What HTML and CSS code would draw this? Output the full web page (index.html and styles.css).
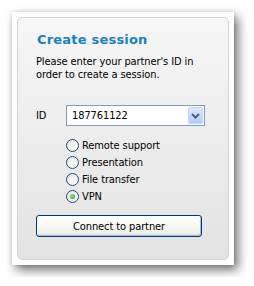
FILE: index.html
```html
<!DOCTYPE html>
<html lang="en">

<head>
    <meta charset="UTF-8">
    <title>Create session</title>
    <link rel="stylesheet" href="styles.css">
</head>

<body>
    <div class="window">
        <div class="panel">
            <h2 class="title">Create session</h2>
            <p class="intro">Please enter your partner's ID in<br>order to create a session.</p>

            <div class="id-row">
                <label class="id-label" for="partner-id">ID</label>
                <div class="combo">
                    <input class="combo-input" id="partner-id" type="text" value="187761122">
                    <span class="combo-btn">
                        <svg viewBox="0 0 9 6" width="9" height="6">
                            <path d="M1 1l3.5 3.5L8 1" fill="none" stroke="#4d6185" stroke-width="2" />
                        </svg>
                    </span>
                </div>
            </div>

            <div class="modes">
                <label class="mode"><span class="radio"></span>Remote support</label>
                <label class="mode"><span class="radio"></span>Presentation</label>
                <label class="mode"><span class="radio"></span>File transfer</label>
                <label class="mode"><span class="radio checked"></span>VPN</label>
            </div>

            <button class="connect">Connect to partner</button>
        </div>
    </div>
</body>

</html>
```

FILE: styles.css
```css
html,
body {
    margin: 0;
    padding: 0;
    background: #ffffff;
}

body {
    padding: 12px;
    font-family: 'DejaVu Sans Condensed', 'DejaVu Sans', sans-serif;
    font-size: 11px;
    letter-spacing: -0.1px;
    color: #000;
}

.window {
    width: 212px;
    height: 243px;
    padding: 5px;
    background: #ffffff;
    box-shadow: 4px 5px 10px rgba(0, 0, 0, 0.55), 0 0 4px rgba(0, 0, 0, 0.15);
}

.panel {
    box-sizing: border-box;
    height: 100%;
    border: 1px solid #d4d4d4;
    border-radius: 5px;
    background: linear-gradient(#f6f6f6, #e3e3e3);
    padding: 13px 0 0 18px;
}

.title {
    margin: 0;
    font-family: 'DejaVu Sans', sans-serif;
    font-size: 13px;
    letter-spacing: 0.2px;
    line-height: 17px;
    font-weight: bold;
    color: #1a7fc3;
    padding-left: 1px;
}

.intro {
    margin: 7px 0 0;
    white-space: nowrap;
    line-height: 13px;
}

.id-row {
    display: flex;
    align-items: center;
    margin-top: 24px;
}

.id-label {
    width: 30px;
}

.combo {
    position: relative;
    width: 139px;
    height: 21px;
    box-sizing: border-box;
    border: 1px solid #7f9db9;
    background: #fff;
}

.combo-input {
    width: 100%;
    height: 100%;
    box-sizing: border-box;
    border: none;
    outline: none;
    padding: 0 0 0 5px;
    font: inherit;
    letter-spacing: inherit;
    background: transparent;
}

.combo-btn {
    position: absolute;
    top: 1px;
    right: 1px;
    bottom: 1px;
    width: 15px;
    border-radius: 2px;
    background: linear-gradient(#dde7fe, #b6c9f8);
    border: 1px solid #c3d3fd;
    box-sizing: border-box;
    display: flex;
    align-items: center;
    justify-content: center;
}

.modes {
    margin: 11px 0 0 30px;
    display: flex;
    flex-direction: column;
}

.mode {
    display: flex;
    align-items: center;
    height: 17px;
}

.radio {
    width: 13px;
    height: 13px;
    box-sizing: border-box;
    border: 1px solid #1c5180;
    border-radius: 50%;
    background: radial-gradient(circle at 65% 65%, #f7f7f4 30%, #dcdcd5);
    margin-right: 3px;
    position: relative;
}

.radio.checked::after {
    content: "";
    position: absolute;
    left: 3px;
    top: 3px;
    width: 5px;
    height: 5px;
    border-radius: 50%;
    background: radial-gradient(circle at 40% 40%, #8fe08f, #21a121);
}

.connect {
    display: block;
    margin-top: 10px;
    width: 166px;
    height: 22px;
    border: 1px solid #003c74;
    border-radius: 3px;
    background: linear-gradient(#ffffff, #f0f0ea 85%, #d6d0c5);
    box-shadow: inset -1px -1px 0 #a8c0e8, inset 1px 1px 0 #fff;
    font: inherit;
    letter-spacing: inherit;
    color: #000;
    padding: 0;
}
```
